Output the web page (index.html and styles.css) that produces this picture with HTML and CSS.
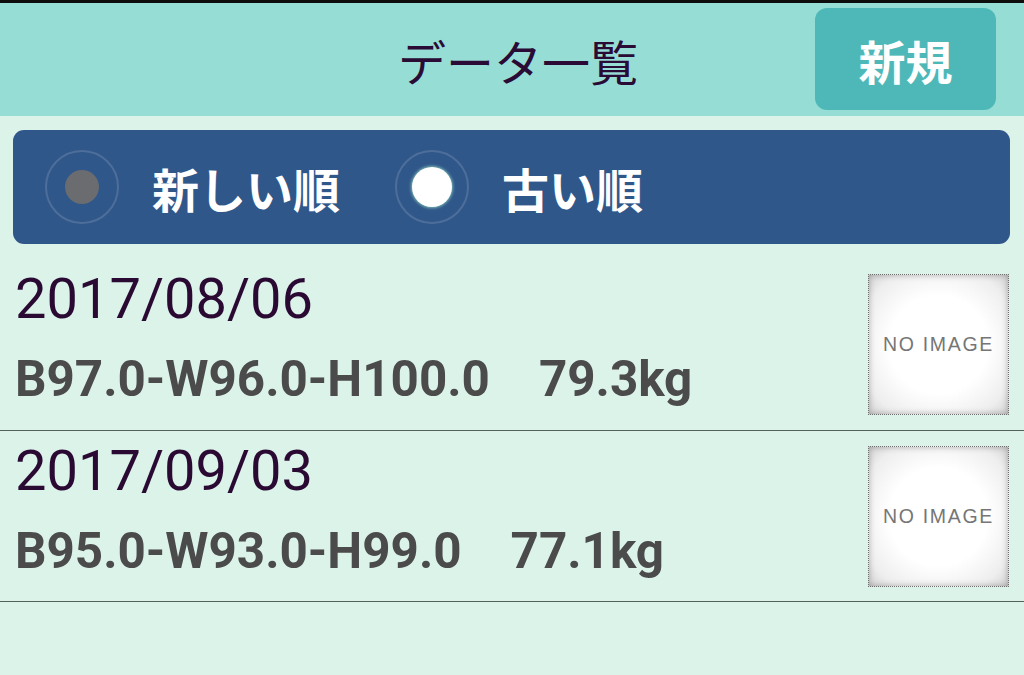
FILE: index.html
```html
<!DOCTYPE html>
<html lang="ja">
<head>
<meta charset="utf-8">
<title>データ一覧</title>
<link rel="stylesheet" href="styles.css">
</head>
<body>
<div class="topline"></div>
<header class="header">
  <h1 class="title">データ一覧</h1>
  <button class="new-btn">新規</button>
</header>
<main class="content">
  <div class="sortbar">
    <label class="opt">
      <span class="radio"><span class="dot off"></span></span>
      <span class="opt-label">新しい順</span>
    </label>
    <label class="opt">
      <span class="radio"><span class="dot on"></span></span>
      <span class="opt-label">古い順</span>
    </label>
  </div>
  <ul class="list">
    <li class="row">
      <div class="info">
        <div class="date">2017/08/06</div>
        <div class="meas">B97.0-W96.0-H100.0　79.3kg</div>
      </div>
      <div class="noimg"><span>NO IMAGE</span></div>
    </li>
    <li class="row">
      <div class="info">
        <div class="date">2017/09/03</div>
        <div class="meas">B95.0-W93.0-H99.0　77.1kg</div>
      </div>
      <div class="noimg"><span>NO IMAGE</span></div>
    </li>
  </ul>
</main>
</body>
</html>
```
FILE: styles.css
```css
* { box-sizing: border-box; }
html, body {
  margin: 0;
  padding: 0;
  width: 1024px;
  height: 675px;
  overflow: hidden;
  background: #dcf3ea;
  font-family: "Noto Sans CJK JP", "Noto Sans", sans-serif;
}
.topline {
  height: 3px;
  background: #0d0d0d;
}
.header {
  height: 113px;
  background: #96ded5;
  display: flex;
  align-items: center;
  position: relative;
}
.title {
  margin: 0;
  flex: 1;
  text-align: center;
  padding-left: 12px;
  font-size: 48px;
  font-weight: 400;
  color: #2a0b35;
  line-height: 1;
}
.new-btn {
  position: absolute;
  right: 28px;
  top: 5px;
  width: 181px;
  height: 102px;
  border: none;
  border-radius: 12px;
  background: #4eb8b9;
  color: #ffffff;
  font-family: "Noto Sans CJK JP", sans-serif;
  font-weight: 700;
  font-size: 47px;
  line-height: 1;
  padding: 0;
}
.content {
  padding-top: 14px;
}
.sortbar {
  margin: 0 14px 0 13px;
  height: 114px;
  background: #30578a;
  border-radius: 11px;
  display: flex;
  align-items: center;
  padding-left: 32px;
  gap: 55px;
}
.opt {
  display: flex;
  align-items: center;
  gap: 33px;
}
.radio {
  width: 74px;
  height: 74px;
  border-radius: 50%;
  border: 2px solid rgba(255, 255, 255, 0.14);
  display: flex;
  align-items: center;
  justify-content: center;
}
.dot {
  border-radius: 50%;
}
.dot.off {
  width: 34px;
  height: 34px;
  background: #6a6c70;
}
.dot.on {
  width: 40px;
  height: 40px;
  background: #ffffff;
  box-shadow: 0 0 3px 1px rgba(160, 230, 200, 0.7);
}
.opt-label {
  color: #ffffff;
  font-weight: 700;
  font-size: 47px;
  line-height: 1;
}
.list {
  list-style: none;
  margin: 0;
  padding: 15px 0 0;
}
.row {
  height: 172px;
  display: flex;
  align-items: center;
  border-bottom: 1.5px solid #56605c;
  padding: 0 15px 0 15px;
}
.row + .row {
  height: 171px;
}
.info {
  flex: 1;
  align-self: flex-start;
  padding-top: 8px;
  font-family: Roboto, "Noto Sans", sans-serif;
}
.date {
  font-size: 56px;
  line-height: 64px;
  color: #2a0a33;
}
.meas {
  margin-top: 19px;
  font-size: 49.4px;
  line-height: 58px;
  font-weight: 700;
  color: #4b4b4b;
  white-space: nowrap;
}
.noimg {
  width: 141px;
  height: 141px;
  border: 1px dotted #6e6e6e;
  background: radial-gradient(ellipse at center, #ffffff 0%, #ffffff 50%, #eeeeee 82%, #d4d4d4 100%);
  box-shadow: inset 0 0 6px rgba(0, 0, 0, 0.28);
  display: flex;
  align-items: center;
  justify-content: center;
  flex-shrink: 0;
}
.noimg span {
  font-family: "Liberation Sans", Arial, sans-serif;
  font-size: 19.5px;
  letter-spacing: 1.7px;
  color: #767676;
  margin-top: 0;
}
```
